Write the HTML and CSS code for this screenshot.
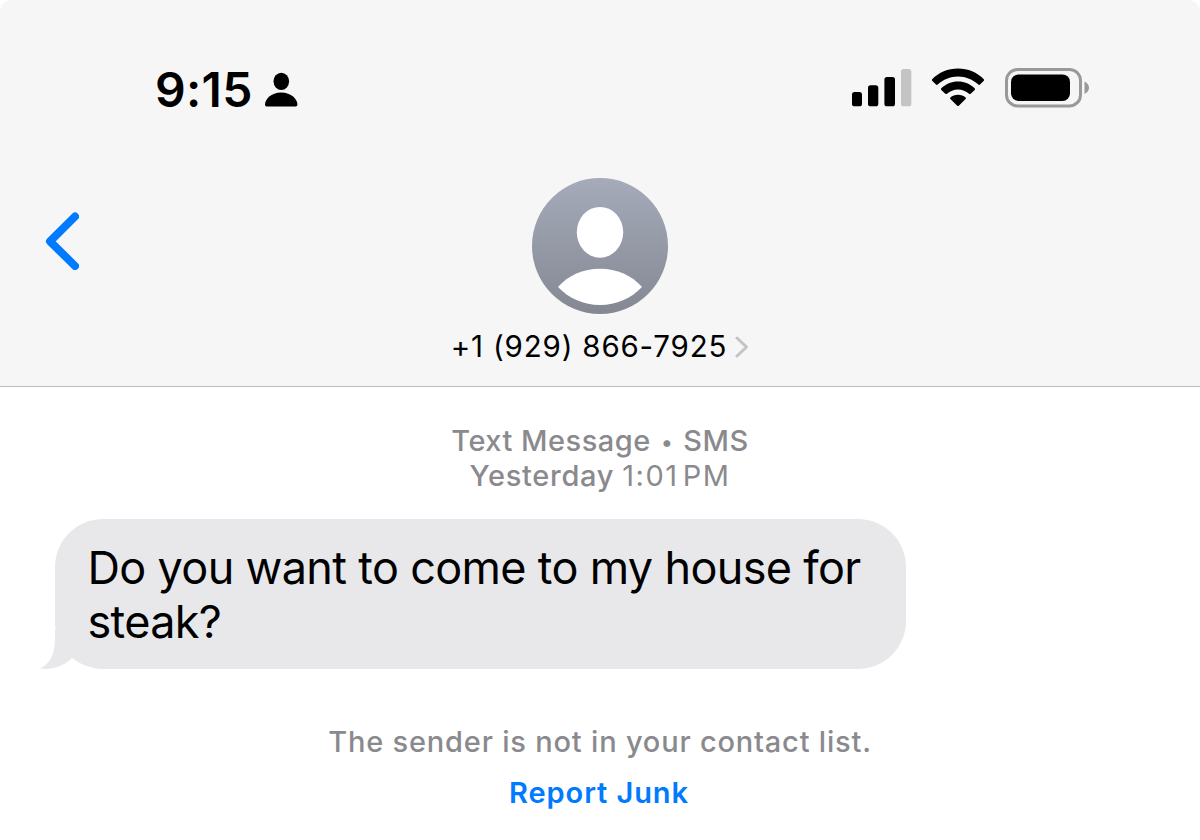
FILE: index.html
```html
<!DOCTYPE html>
<html lang="en">
<head>
  <meta charset="UTF-8" />
  <meta name="viewport" content="width=device-width, initial-scale=1.0"/>
  <title>Messages</title>
  <link rel="stylesheet" href="styles.css">
</head>
<body>
  <div class="phone">
    <header>
      <div class="status-bar">
        <span class="time">9:15</span>
        <svg class="focus-icon" width="34" height="36" viewBox="0 0 34 36">
          <ellipse cx="17.3" cy="10.3" rx="7.8" ry="8.6"/>
          <path d="M3.6 35.5C1.8 35.5 1 34.8 1 33.4C1 28.4 7 21.5 17.2 21.5S33.4 28.4 33.4 33.4C33.4 34.8 32.6 35.5 30.8 35.5Z"/>
        </svg>
        <div class="status-icons">
          <svg width="60" height="40" viewBox="0 0 60 40">
            <rect x="0" y="24" width="10" height="14.3" rx="2.6"/>
            <rect x="16" y="17.3" width="10.3" height="21" rx="2.6"/>
            <rect x="32.4" y="9" width="10.6" height="29.3" rx="2.6"/>
            <rect class="dim" x="49" y="1" width="10.3" height="37.3" rx="2.6"/>
          </svg>
          <svg class="wifi" width="54" height="40" viewBox="0 0 54 40">
            <path d="M27 .5C37 .5 46.2 4.4 52.8 11.2Q53.6 12 52.8 12.8L49 16.6Q48.2 17.4 47.3 16.6C41.8 11.5 34.8 8.5 27 8.5S12.2 11.5 6.7 16.6Q5.8 17.4 5 16.6L1.2 12.8Q.4 12 1.2 11.2C7.8 4.4 17 .5 27 .5Z"/>
            <path d="M27 13.6C33.5 13.6 39.3 16.1 43.7 20.3Q44.5 21.1 43.7 21.9L39.7 25.7Q38.9 26.4 38 25.7C35 23 31.2 21.4 27 21.4S19 23 16 25.7Q15.1 26.4 14.3 25.7L10.3 21.9Q9.5 21.1 10.3 20.3C14.7 16.1 20.5 13.6 27 13.6Z"/>
            <path d="M27 26.7C30 26.7 32.6 27.7 34.6 29.4Q35.4 30.2 34.6 31L27.8 37.7Q27 38.5 26.2 37.7L19.4 31Q18.6 30.2 19.4 29.4C21.4 27.7 24 26.7 27 26.7Z"/>
          </svg>
          <svg width="85" height="40" viewBox="0 0 85 40">
            <rect class="battery-case" x="1.5" y="1.5" width="74" height="36.4" rx="11"/>
            <rect x="6" y="6.4" width="59" height="26.6" rx="7.5"/>
            <path class="battery-cap" d="M79.5 13.5C85.5 16 85.5 23.5 79.5 26Z"/>
          </svg>
        </div>
      </div>

      <div class="nav">
        <svg class="back" width="34" height="58" viewBox="0 0 34 58">
          <path d="M30 4.5L5 29.3L30 54"/>
        </svg>
        <div class="contact">
          <svg class="avatar" width="136" height="136" viewBox="0 0 136 136">
            <defs>
              <linearGradient id="avatar-bg" x1="0" y1="0" x2="0" y2="1">
                <stop offset="0" stop-color="#a5abb9"/>
                <stop offset="1" stop-color="#848893"/>
              </linearGradient>
            </defs>
            <circle cx="68" cy="68" r="68" fill="url(#avatar-bg)"/>
            <ellipse cx="68" cy="54.3" rx="23.2" ry="25.4" fill="#fff"/>
            <path d="M26 109C36 97.5 51 90.7 68 90.7S100 97.5 110 109C99 120.5 84.5 127 68 127S37 120.5 26 109Z" fill="#fff"/>
          </svg>
          <div class="number">
            <span>+1 (929) 866-7925</span>
            <svg width="14" height="22" viewBox="0 0 14 22">
              <path d="M2 2L11.5 11L2 20"/>
            </svg>
          </div>
        </div>
      </div>
    </header>

    <main>
      <div class="meta">
        <p class="service">Text Message <span class="dot">•</span> SMS</p>
        <p class="date"><b>Yesterday</b> <span>1:01&#8202;PM</span></p>
      </div>

      <div class="bubble">
        <p>Do you want to come to my house for steak?</p>
        <svg class="tail" width="50" height="40" viewBox="0 0 50 40">
          <path d="M15 0V6C15 22 13 33 0 39.6C13 41 24 37 32 29L40 10Z"/>
        </svg>
      </div>

      <p class="notice">The sender is not in your contact list.</p>
      <a class="report" href="#">Report Junk</a>
    </main>
  </div>
</body>
</html>
```
FILE: styles.css
```css
:root {
  --blue: #007aff;
  --gray: #8a8a8e;
  --bar-bg: #f6f6f6;
  --bubble-bg: #e8e8ea;
}

body {
  font-family: Inter, 'Liberation Sans', sans-serif;
  background-color: #fff;
  color: #000;
  margin: 0;
}

p {
  margin: 0;
}

svg {
  display: block;
  flex-shrink: 0;
}

.phone {
  height: 840px;
  overflow: hidden;
}

header {
  box-sizing: border-box;
  height: 387px;
  padding-top: 64px;
  background-color: var(--bar-bg);
  border-bottom: 1px solid #bcbcbd;
  border-radius: 12px 12px 0 0;
}

.status-bar {
  display: flex;
  align-items: center;
  height: 48px;
  padding: 0 110px 0 155px;
}

.time {
  font-size: 48px;
  font-weight: 600;
  line-height: 48px;
  padding-top: 3px;
  letter-spacing: 0.3px;
}

.focus-icon {
  margin-left: 11px;
  margin-top: 2px;
}

.status-icons {
  display: flex;
  margin-left: auto;
}

.wifi {
  margin: 0 20px 0 19px;
}

.dim {
  fill: #c4c4c4;
}

.battery-case {
  fill: none;
  stroke: #999;
  stroke-width: 3;
}

.battery-cap {
  fill: #999;
}

.nav {
  display: grid;
  grid-template-columns: 1fr auto 1fr;
  padding-top: 66px;
}

.back {
  margin: 34px 0 0 45px;
  fill: none;
  stroke: var(--blue);
  stroke-width: 8;
  stroke-linecap: round;
  stroke-linejoin: round;
}

.contact {
  display: flex;
  flex-direction: column;
  align-items: center;
}

.number {
  display: flex;
  align-items: center;
  gap: 8px;
  margin-top: 14px;
  font-size: 29.5px;
  line-height: 37px;
  letter-spacing: 0.82px;
}

.number path {
  fill: none;
  stroke: #c4c4c6;
  stroke-width: 3;
  stroke-linecap: round;
  stroke-linejoin: round;
}

main {
  display: flex;
  flex-direction: column;
  align-items: center;
  padding-top: 36px;
}

.meta {
  color: var(--gray);
  font-size: 29px;
  line-height: 35px;
  text-align: center;
}

.service {
  font-weight: 500;
  letter-spacing: 0.5px;
}

.dot {
  display: inline-block;
  width: 16px;
  font-size: 22px;
  line-height: 20px;
  vertical-align: 1px;
}

.date b {
  font-weight: 500;
  letter-spacing: 0.7px;
}

.date span {
  letter-spacing: 1.5px;
}

.bubble {
  position: relative;
  box-sizing: border-box;
  align-self: flex-start;
  width: 851px;
  height: 150px;
  margin: 26px 0 0 55px;
  padding: 22px 32px 0 32.5px;
  background-color: var(--bubble-bg);
  border-radius: 48px;
  font-size: 45px;
  line-height: 54px;
  letter-spacing: -0.67px;
}

.tail {
  position: absolute;
  left: -15px;
  bottom: 0;
  fill: var(--bubble-bg);
}

.notice {
  margin-top: 55px;
  color: var(--gray);
  font-size: 29px;
  font-weight: 500;
  line-height: 36px;
  letter-spacing: 0.8px;
}

.report {
  margin-top: 15px;
  margin-right: 2px;
  color: var(--blue);
  font-size: 29px;
  font-weight: 600;
  line-height: 36px;
  letter-spacing: 0.9px;
  text-decoration: none;
}
```
